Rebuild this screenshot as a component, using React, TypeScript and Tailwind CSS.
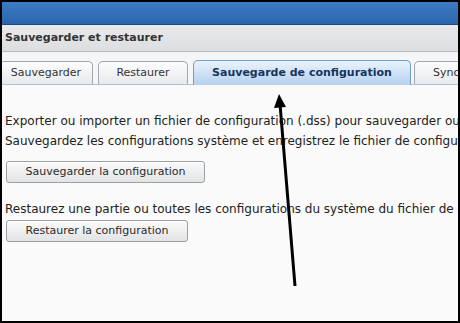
import React from 'react';

const font = { fontFamily: '"DejaVu Sans", Verdana, sans-serif' };

const tabs = [
  { label: 'Sauvegarder', w: 'w-[94px]', ml: '-ml-[3px]' },
  { label: 'Restaurer', w: 'w-[90px]', ml: '' },
  { label: 'Sauvegarde de configuration', w: 'w-[218px]', ml: '', active: true },
  { label: 'Synchronisation', w: 'w-[126px]', ml: '-ml-[2px]' },
];

const Btn = ({ label, w }: { label: string; w: string }) => (
  <button
    className={`${w} h-[22px] rounded-[3px] border border-[#9c9fa3] bg-gradient-to-b from-[#fbfbfb] to-[#e2e3e5] text-[11px] text-[#2a2a2a] shadow-[inset_0_1px_0_#fff]`}
  >
    {label}
  </button>
);

export default function App() {
  return (
    <div
      className="relative w-[460px] h-[323px] border-2 border-black overflow-hidden flex flex-col bg-[#fafafa]"
      style={font}
    >
      {/* top bar */}
      <div className="h-[23px] shrink-0 bg-gradient-to-b from-[#3c7cc4] to-[#2b66ad] border-b border-[#1d4a80]" />

      {/* window title */}
      <div className="h-[27px] shrink-0 flex items-center pl-[3px] bg-gradient-to-b from-[#e9eaec] to-[#dddee1] border-b border-[#b7babe]">
        <span className="text-[11px] font-bold text-[#333] whitespace-nowrap">Sauvegarder et restaurer</span>
      </div>

      {/* tabs */}
      <div className="h-[33px] shrink-0 flex items-end gap-[5px] bg-[#f5f6f7] border-b border-[#a9c6e6] whitespace-nowrap">
        {tabs.map((t) =>
          t.active ? (
            <div
              key={t.label}
              className={`${t.w} h-[25px] shrink-0 -mb-px rounded-t-[5px] border border-b-0 border-[#6f9ed3] bg-gradient-to-b from-[#eaf3fc] to-[#b5d0ee] flex items-center justify-center text-[11px] font-bold text-[#15355e]`}
            >
              {t.label}
            </div>
          ) : (
            <div
              key={t.label}
              className={`${t.w} ${t.ml} h-[23px] shrink-0 rounded-t-[5px] border border-b-0 border-[#a3a7ad] bg-gradient-to-b from-[#fdfdfd] to-[#e7e9ec] flex items-center justify-center text-[11px] text-[#333]`}
            >
              {t.label}
            </div>
          )
        )}
      </div>

      {/* content */}
      <div className="flex flex-col pl-[3px] pt-[29px] text-[12px] text-[#222] whitespace-nowrap">
        <p className="leading-[14px]">Exporter ou importer un fichier de configuration (.dss) pour sauvegarder ou restaurer les configurations.</p>
        <p className="leading-[14px] mt-[6px]">Sauvegardez les configurations système et enregistrez le fichier de configuration sur votre ordinateur.</p>
        <div className="mt-[13px] pl-px">
          <Btn label="Sauvegarder la configuration" w="w-[199px]" />
        </div>
        <p className="leading-[14px] mt-[19px]">Restaurez une partie ou toutes les configurations du système du fichier de configuration.</p>
        <div className="mt-[4px] pl-px">
          <Btn label="Restaurer la configuration" w="w-[182px]" />
        </div>
      </div>

      {/* annotation arrow */}
      <svg className="absolute left-0 top-0 pointer-events-none" width="460" height="323" viewBox="0 0 460 323">
        <line x1="293" y1="284" x2="278" y2="102" stroke="#000" strokeWidth="3" />
        <polygon points="277,92 272,106 284,105" fill="#000" />
      </svg>
    </div>
  );
}
